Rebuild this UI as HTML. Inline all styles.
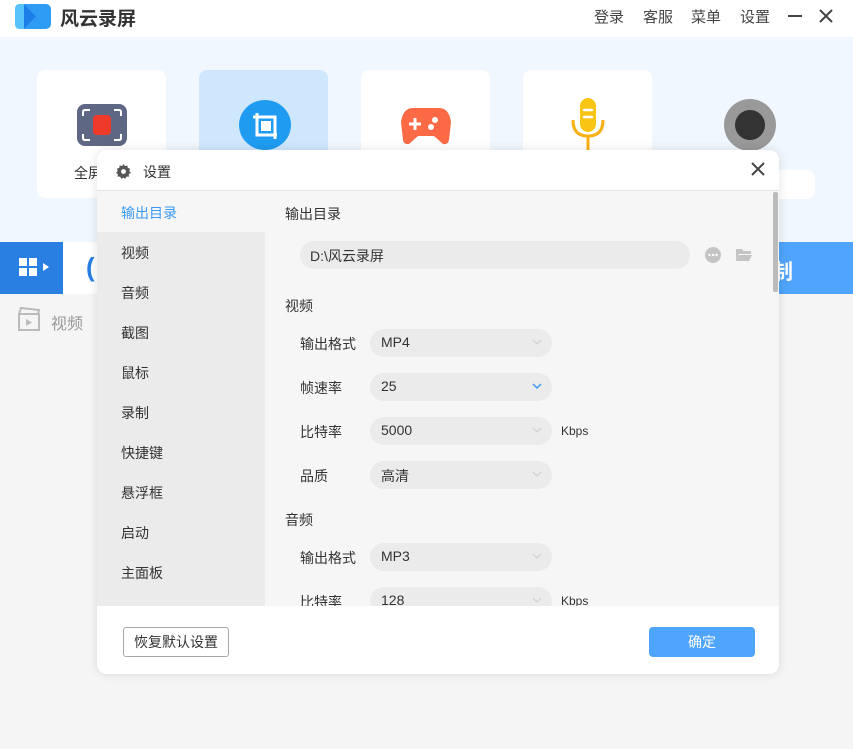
<!DOCTYPE html>
<html><head><meta charset="utf-8"><style>
*{margin:0;padding:0;box-sizing:border-box}
body{width:853px;height:749px;overflow:hidden;background:#f5f5f5;font-family:"Liberation Sans","Noto Sans CJK SC",sans-serif;position:relative;color:#333}
.a{position:absolute}
.hdr{left:0;top:0;width:853px;height:37px;background:#fff}
.hero{left:0;top:37px;width:853px;height:205px;background:#f0f7fe}
.card{top:70px;width:129px;height:128px;background:#fff;border-radius:8px}
.nav{font-size:15px;color:#444;top:6px}
.side{left:97px;top:192px;width:168px;height:414px;background:#ebebeb}
.si{position:absolute;left:24px;font-size:14px;color:#333}
.lbl{font-size:14px;color:#333}
.sel{width:182px;height:28px;background:#ebebeb;border-radius:14px;font-size:14px;color:#333;padding:5px 0 0 11px}
.sel svg{position:absolute;right:10px;top:10px}
</style></head><body>
<div class="a hdr"></div>
<svg class="a" style="left:14px;top:3px" width="38" height="27" viewBox="0 0 38 27"><rect x="1" y="1" width="36" height="25" rx="5" fill="#2f9cf4"/><path d="M1 6Q1 1 6 1h4l12 12.5L10 26H6q-5 0-5-5z" fill="#56c4fb"/><path d="M10 1l12 12.5L10 26z" fill="#1c7fe9"/></svg>
<div class="a" style="left:60px;top:4px;font-size:19px;color:#333;font-weight:bold">风云录屏</div>
<div class="a nav" style="left:594px">登录</div>
<div class="a nav" style="left:643px">客服</div>
<div class="a nav" style="left:691px">菜单</div>
<div class="a nav" style="left:740px">设置</div>
<div class="a" style="left:788px;top:15px;width:14px;height:2px;background:#444"></div>
<svg class="a" style="left:819px;top:9px" width="14" height="14"><path d="M1 1l12 12M13 1L1 13" stroke="#444" stroke-width="2"/></svg>
<div class="a hero"></div>
<div class="a card" style="left:37px"></div>
<div class="a card" style="left:199px;background:#cfe7fd"></div>
<div class="a card" style="left:361px"></div>
<div class="a card" style="left:523px"></div>
<div class="a" style="left:690px;top:170px;width:125px;height:29px;background:#fff;border-radius:8px"></div>
<div class="a" style="left:77px;top:104px;width:50px;height:42px;background:#5e6884;border-radius:8px"></div>
<svg class="a" style="left:77px;top:104px" width="50" height="42"><path d="M6 12V8q0-2 2-2h5M37 6h5q2 0 2 2v4M44 30v4q0 2-2 2h-5M13 36H8q-2 0-2-2v-4" stroke="#fff" stroke-width="2" fill="none"/><rect x="16" y="11" width="18" height="20" rx="4" fill="#ee3a2a"/></svg>
<div class="a" style="left:239px;top:100px;width:52px;height:50px;background:#1f9cf2;border-radius:50%"></div>
<svg class="a" style="left:239px;top:100px" width="52" height="50"><path d="M18 13v22h20M14 17h22v22" stroke="#fff" stroke-width="3" fill="none"/><rect x="22" y="21" width="10" height="10" fill="#fff"/></svg>
<svg class="a" style="left:401px;top:104px" width="50" height="42"><path d="M12 4h26q10 0 12 14l-2 18q-1 5-6 4l-9-8H17l-9 8q-5 1-6-4L0 18Q2 4 12 4z" fill="#fb6a45"/><path d="M14 14v12M8 20h12" stroke="#fff" stroke-width="3"/><circle cx="34" cy="16" r="3" fill="#fff"/><circle cx="30" cy="23" r="3" fill="#fff"/></svg>
<svg class="a" style="left:570px;top:98px" width="36" height="52"><rect x="10" y="0" width="16" height="34" rx="8" fill="#f9c515"/><path d="M3 22q0 16 15 16t15-16" stroke="#f9b015" stroke-width="3" fill="none"/><path d="M18 38v14" stroke="#f9b015" stroke-width="3"/><path d="M14 12h8M14 19h8" stroke="#fff" stroke-width="2.5" stroke-linecap="round"/></svg>
<div class="a" style="left:724px;top:99px;width:52px;height:52px;background:#999;border-radius:50%"><div style="margin:11px;width:30px;height:30px;background:#333;border-radius:50%"></div></div>
<div class="a" style="left:74px;top:163px;font-size:14px">全屏</div>
<div class="a" style="left:0;top:242px;width:63px;height:52px;background:#2a80e2"></div>
<svg class="a" style="left:19px;top:258px" width="34" height="20"><rect x="0" y="0" width="8" height="8" fill="#fff"/><rect x="10" y="0" width="8" height="8" fill="#fff"/><rect x="0" y="10" width="8" height="8" fill="#fff"/><rect x="10" y="10" width="8" height="8" fill="#fff"/><path d="M24 5l6 4-6 4z" fill="#fff"/></svg>
<div class="a" style="left:63px;top:242px;width:716px;height:52px;background:#fff"></div>
<div class="a" style="left:86px;top:252px;font-size:26px;color:#2a80e2;font-weight:bold">(</div>
<div class="a" style="left:779px;top:242px;width:74px;height:52px;background:#4fa4fb"></div>
<div class="a" style="left:772px;top:256px;font-size:21px;color:#fff;font-weight:bold">制</div>
<svg class="a" style="left:17px;top:306px" width="24" height="26"><path d="M2 8h20v16H2z" stroke="#bbb" stroke-width="2" fill="none"/><path d="M2 8l2-6 18 2-1 4" stroke="#bbb" stroke-width="2" fill="none"/><path d="M9 13l6 3.5-6 3.5z" fill="#bbb"/></svg>
<div class="a" style="left:51px;top:310px;font-size:16px;color:#999">视频</div>

<div class="a" style="left:97px;top:150px;width:682px;height:524px;background:#f6f6f6;border-radius:10px;overflow:hidden;box-shadow:0 0 10px rgba(0,0,0,.12)">
<div class="a" style="left:0;top:0;width:682px;height:41px;background:#fff;border-bottom:1px solid #e4e4e4"></div>
<svg class="a" style="left:19px;top:14px" width="15" height="15" viewBox="0 0 16 16"><path d="M8 0l1.5 2.2 2.6-.8.4 2.7 2.6.9-1 2.5L16 9.4l-2.4 1.3.3 2.7-2.7.1-1.4 2.3L8 14.5l-2.2 1.3-1.4-2.3-2.7-.1.3-2.7L0 9.4l1.9-1.9-1-2.5 2.6-.9.4-2.7 2.6.8z" fill="#555"/><circle cx="8" cy="8" r="2.6" fill="#fff"/></svg>
<div class="a" style="left:46px;top:12px;font-size:14px">设置</div>
<svg class="a" style="left:654px;top:12px" width="14" height="14"><path d="M1 1l12 12M13 1L1 13" stroke="#444" stroke-width="2"/></svg>
<div class="a" style="left:676px;top:42px;width:5px;height:100px;background:#bbb;border-radius:2px"></div>
<div class="a" style="left:0;top:456px;width:682px;height:68px;background:#fff"></div>
</div>
<div class="a side">
<div style="position:absolute;left:0;top:0;width:168px;height:40px;background:#f6f6f6"></div>
<div class="si" style="top:11px;color:#3d9af5">输出目录</div>
<div class="si" style="top:51px">视频</div>
<div class="si" style="top:91px">音频</div>
<div class="si" style="top:131px">截图</div>
<div class="si" style="top:171px">鼠标</div>
<div class="si" style="top:211px">录制</div>
<div class="si" style="top:251px">快捷键</div>
<div class="si" style="top:291px">悬浮框</div>
<div class="si" style="top:331px">启动</div>
<div class="si" style="top:371px">主面板</div>
</div>
<div class="a lbl" style="left:285px;top:204px">输出目录</div>
<div class="a" style="left:300px;top:241px;width:390px;height:28px;background:#ebebeb;border-radius:14px;font-size:14px;padding:5px 0 0 10px">D:\风云录屏</div>
<svg class="a" style="left:705px;top:247px" width="16" height="16"><circle cx="8" cy="8" r="8" fill="#c4c4c4"/><circle cx="4.5" cy="8" r="1.2" fill="#fff"/><circle cx="8" cy="8" r="1.2" fill="#fff"/><circle cx="11.5" cy="8" r="1.2" fill="#fff"/></svg>
<svg class="a" style="left:736px;top:248px" width="16" height="14"><path d="M0 1h6l1.5 2H15v3H3L0 13z" fill="#c4c4c4"/><path d="M3 7h13l-3 6H0z" fill="#c4c4c4"/></svg>
<div class="a lbl" style="left:285px;top:296px">视频</div>
<div class="a lbl" style="left:300px;top:334px">输出格式</div>
<div class="a sel" style="left:370px;top:329px">MP4<svg width="10" height="6"><path d="M1 1l4 4 4-4" stroke="#ccc" fill="none"/></svg></div>
<div class="a lbl" style="left:300px;top:378px">帧速率</div>
<div class="a sel" style="left:370px;top:373px">25<svg width="10" height="6"><path d="M1 1l4 4 4-4" stroke="#3d9af5" fill="none" stroke-width="1.5"/></svg></div>
<div class="a lbl" style="left:300px;top:422px">比特率</div>
<div class="a sel" style="left:370px;top:417px">5000<svg width="10" height="6"><path d="M1 1l4 4 4-4" stroke="#ccc" fill="none"/></svg></div>
<div class="a" style="left:561px;top:424px;font-size:12px">Kbps</div>
<div class="a lbl" style="left:300px;top:466px">品质</div>
<div class="a sel" style="left:370px;top:461px">高清<svg width="10" height="6"><path d="M1 1l4 4 4-4" stroke="#ccc" fill="none"/></svg></div>
<div class="a lbl" style="left:285px;top:510px">音频</div>
<div class="a lbl" style="left:300px;top:548px">输出格式</div>
<div class="a sel" style="left:370px;top:543px">MP3<svg width="10" height="6"><path d="M1 1l4 4 4-4" stroke="#ccc" fill="none"/></svg></div>
<div class="a" style="left:265px;top:587px;width:508px;height:19px;overflow:hidden">
<div class="a lbl" style="left:35px;top:5px">比特率</div>
<div class="a sel" style="left:105px;top:0">128<svg width="10" height="6"><path d="M1 1l4 4 4-4" stroke="#ccc" fill="none"/></svg></div>
<div class="a" style="left:296px;top:7px;font-size:12px">Kbps</div>
</div>
<div class="a" style="left:123px;top:627px;width:106px;height:30px;border:1px solid #aaa;border-radius:3px;background:#fff;font-size:14px;text-align:center;line-height:28px">恢复默认设置</div>
<div class="a" style="left:649px;top:627px;width:106px;height:30px;background:#4fa4fb;border-radius:4px;color:#fff;font-size:14px;text-align:center;line-height:30px">确定</div>
</body></html>
